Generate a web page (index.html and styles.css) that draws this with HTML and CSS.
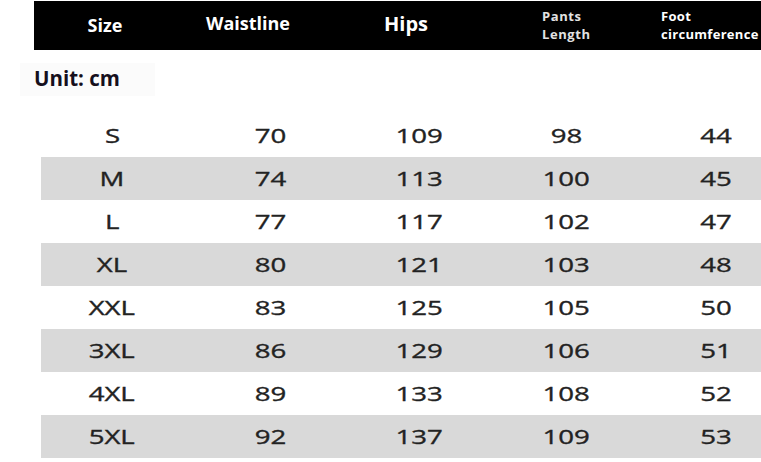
FILE: index.html
```html
<!DOCTYPE html>
<html>
<head>
<meta charset="utf-8">
<link rel="stylesheet" href="styles.css">
</head>
<body>
<div class="page">
  <div class="head">
    <div class="hc c-size">Size</div>
    <div class="hc c-waist">Waistline</div>
    <div class="hc c-hips">Hips</div>
    <div class="hc c-small c-pants">Pants<br>Length</div>
    <div class="hc c-small c-foot">Foot<br>circumference</div>
  </div>
  <div class="unit-wrap"><div class="unit">Unit: cm</div></div>
  <div class="rows">
    <div class="row"><span class="v">S</span><span class="v">70</span><span class="v">109</span><span class="v">98</span><span class="v">44</span></div>
    <div class="row alt"><span class="v">M</span><span class="v">74</span><span class="v">113</span><span class="v">100</span><span class="v">45</span></div>
    <div class="row"><span class="v">L</span><span class="v">77</span><span class="v">117</span><span class="v">102</span><span class="v">47</span></div>
    <div class="row alt"><span class="v">XL</span><span class="v">80</span><span class="v">121</span><span class="v">103</span><span class="v">48</span></div>
    <div class="row"><span class="v">XXL</span><span class="v">83</span><span class="v">125</span><span class="v">105</span><span class="v">50</span></div>
    <div class="row alt"><span class="v">3XL</span><span class="v">86</span><span class="v">129</span><span class="v">106</span><span class="v">51</span></div>
    <div class="row"><span class="v">4XL</span><span class="v">89</span><span class="v">133</span><span class="v">108</span><span class="v">52</span></div>
    <div class="row alt"><span class="v">5XL</span><span class="v">92</span><span class="v">137</span><span class="v">109</span><span class="v">53</span></div>
  </div>
</div>
</body>
</html>
```

FILE: styles.css
```css
html, body {
  margin: 0;
  padding: 0;
  background: #ffffff;
  overflow: hidden;
}
body {
  width: 761px;
  height: 462px;
  font-family: "Open Sans", "DejaVu Sans", sans-serif;
}
.page {
  padding-top: 1px;
}
.head {
  margin-left: 34px;
  height: 49px;
  background: #000;
  color: #fff;
  display: grid;
  grid-template-columns: 142px 144px 172px 119px 1fr;
  align-items: center;
  font-weight: 700;
}
.hc {
  text-align: center;
  white-space: nowrap;
}
.c-size {
  font-size: 18px;
  padding-bottom: 2px;
}
.c-waist {
  font-size: 18px;
  padding-bottom: 6px;
}
.c-hips {
  font-size: 20px;
  padding-bottom: 4px;
}
.c-small {
  text-align: left;
  padding-left: 50px;
  font-size: 13px;
  line-height: 18px;
  letter-spacing: 0.6px;
  padding-bottom: 2px;
}
.c-foot {
  letter-spacing: 0.3px;
}
.c-pants {
  color: #e2e2e2;
}
.unit-wrap {
  margin-top: 13px;
  margin-left: 20px;
}
.unit {
  display: inline-block;
  background: #fbfbfb;
  padding: 2px 35px 4px 14px;
  font-size: 20.5px;
  line-height: 27px;
  font-weight: 700;
  color: #160f1c;
}
.rows {
  margin-top: 18px;
  margin-left: 41px;
}
.row {
  height: 43px;
  display: grid;
  grid-template-columns: 142px 174px 124px 170px 1fr;
  align-items: center;
  justify-items: center;
}
.row .v:last-child {
  padding-left: 14px;
}
.row.alt {
  background: #d9d9d9;
}
.v {
  display: inline-block;
  font-size: 20px;
  line-height: 27px;
  color: #222;
  transform: scaleX(1.38);
  -webkit-text-stroke: 0.35px #222;
}
```
